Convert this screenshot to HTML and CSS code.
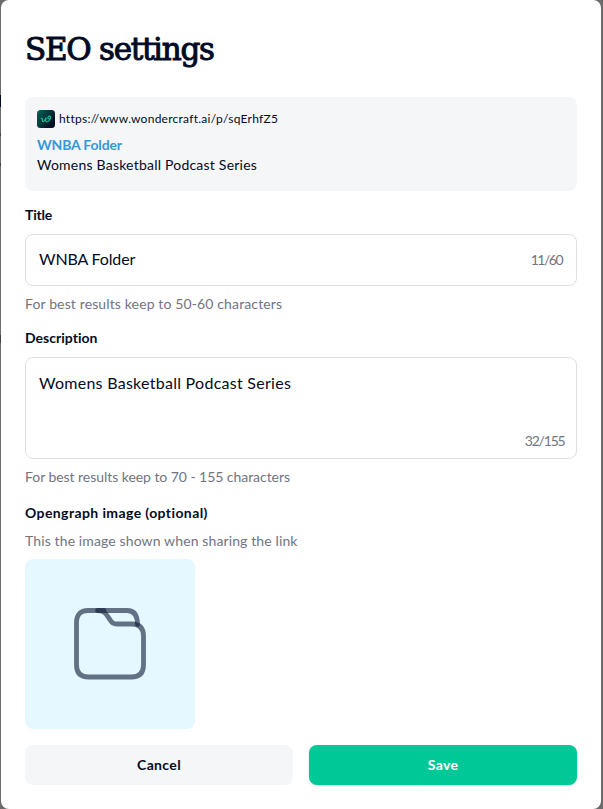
FILE: index.html
```html
<!DOCTYPE html>
<html lang="en">
<head>
<meta charset="utf-8">
<title>SEO settings</title>
<link rel="stylesheet" href="styles.css">
</head>
<body>
<main class="modal">
  <h1 class="heading">SEO settings</h1>
  <section class="preview">
    <div class="site">
      <svg class="logo" width="18" height="18" viewBox="0 0 18 18">
        <defs><linearGradient id="g" x1="0" y1="0" x2="1" y2="0.7"><stop offset="0" stop-color="#036657"/><stop offset="1" stop-color="#020a22"/></linearGradient></defs>
        <rect width="18" height="18" rx="3.5" fill="url(#g)"/>
        <path d="M4.300 8.500C5.300 7.800 5.300 9.500 5.400 10.800C5.700 12.600 7.500 11.500 9.200 7.400C8.400 10 8.500 12.200 9.900 12C11.800 11.700 13.900 8.600 13.600 6.900C13.300 5.400 11.200 6.100 10.900 7.500C10.700 8.500 11.400 9 12.200 8.700" fill="none" stroke="#13c79b" stroke-width="1.100" stroke-linecap="round"/>
      </svg>
      <span class="url">https://www.wondercraft.ai/p/sqErhfZ5</span>
    </div>
    <div class="preview-title">WNBA Folder</div>
    <div class="preview-text">Womens Basketball Podcast Series</div>
  </section>
  <div class="label label-title">Title</div>
  <div class="field"><span class="value value-title">WNBA Folder</span><span class="count count-title">11/60</span></div>
  <div class="hint hint-title">For best results keep to 50-60 characters</div>
  <div class="label label-desc">Description</div>
  <div class="field area"><span class="value value-desc">Womens Basketball Podcast Series</span><span class="count count-desc">32/155</span></div>
  <div class="hint hint-desc">For best results keep to 70 - 155 characters</div>
  <div class="label label-image">Opengraph image (optional)</div>
  <div class="hint hint-image">This the image shown when sharing the link</div>
  <div class="image">
    <svg class="folder" width="100" height="100" viewBox="0 0 100 100" fill="none" stroke="#0b1733" stroke-opacity=".6" stroke-width="4.800" stroke-linecap="round" stroke-linejoin="round">
      <path d="M44 15.500H28Q16.500 15.500 16.500 28V70Q16.500 82 28.500 82H71.500Q83.500 82 83.500 70V41Q83.500 29 72 29H57C52.500 29 52 27.500 49.500 24C46 19 44.500 15.500 37.500 15.500"/>
      <path d="M37.500 15.500H67Q77.500 15.500 77.500 29.500"/>
    </svg>
  </div>
  <div class="actions">
    <button class="button cancel">Cancel</button>
    <button class="button save">Save</button>
  </div>
</main>
</body>
</html>
```
FILE: styles.css
```css
* { box-sizing: border-box; }
body {
  margin: 0;
  padding: 0 2px 0 1px;
  height: 809px;
  overflow: hidden;
  background:
    linear-gradient(#030b24, #030b24) 0 95px / 1px 12px no-repeat,
    linear-gradient(#444, #444) 0 133px / 1px 3px no-repeat,
    linear-gradient(#444, #444) 0 163px / 1px 3px no-repeat,
    linear-gradient(#444, #444) 0 335px / 1px 8px no-repeat,
    #6b6b6b;
  color: #030b24;
  font-family: Lato, "Liberation Sans", sans-serif;
  font-variant-ligatures: none;
  white-space: nowrap;
}
.modal {
  height: 809px;
  padding: 24px;
  border-radius: 8px;
  background: #fff;
}
.heading {
  margin: 0 0 25px;
  height: 48px;
  padding-top: 1px;
  font: 400 31px/48px "DejaVu Serif", serif;
  -webkit-text-stroke: 1px #030b24;
  letter-spacing: -1.28px;
}
.preview {
  height: 94px;
  padding: 12px;
  border-radius: 8px;
  background: #f4f6f8;
}
.site { display: flex; align-items: center; gap: 4px; height: 20px; }
.url { font-size: 12px; line-height: 18px; letter-spacing: 0.26px; }
.preview-title {
  margin-top: 6px;
  font-size: 14px;
  line-height: 20px;
  font-weight: 700;
  letter-spacing: -0.17px;
  color: #3498db;
}
.preview-text { font-size: 14px; line-height: 20px; letter-spacing: 0.22px; }
.label { font-size: 14px; line-height: 20px; font-weight: 700; }
.label-title { margin: 14px 0 9px; letter-spacing: -0.2px; }
.field {
  display: flex;
  justify-content: space-between;
  height: 52px;
  padding: 13px;
  border: 1px solid #dddfe1;
  border-radius: 8px;
}
.value { font-size: 16px; line-height: 24px; }
.value-title { line-height: 22px; letter-spacing: -0.15px; }
.value-desc { letter-spacing: 0.27px; }
.count { font-size: 14px; line-height: 24px; color: #6f7584; }
.count-title { letter-spacing: -1.5px; margin-right: 1px; }
.hint { font-size: 14px; line-height: 20px; color: #6f7584; }
.hint-title { margin-top: 8px; letter-spacing: 0.13px; }
.label-desc { margin: 14px 0 9px; letter-spacing: 0.02px; }
.area { height: 102px; padding-right: 11px; }
.count-desc { align-self: flex-end; line-height: 20px; margin: 0 0.5px -6px 0; letter-spacing: -1.2px; }
.hint-desc { margin-top: 8px; letter-spacing: -0.05px; }
.label-image { margin: 16px 0 8px; letter-spacing: 0.4px; }
.hint-image { letter-spacing: 0.12px; }
.image {
  display: grid;
  place-items: center;
  width: 170px;
  height: 170px;
  margin-top: 8px;
  padding-top: 2px;
  border-radius: 8px;
  background: #e6f8ff;
}
.actions { display: grid; grid-template-columns: 1fr 1fr; gap: 16px; margin-top: 16px; }
.button {
  height: 40px;
  padding: 0;
  border: 0;
  border-radius: 8px;
  font: 700 14px/20px Lato, sans-serif;
  letter-spacing: 0.35px;
}
.cancel { background: #f4f6f8; color: #030b24; }
.save { background: #00c896; color: #fff; box-shadow: 0 1px 3px rgba(0, 0, 0, .12); }
```
